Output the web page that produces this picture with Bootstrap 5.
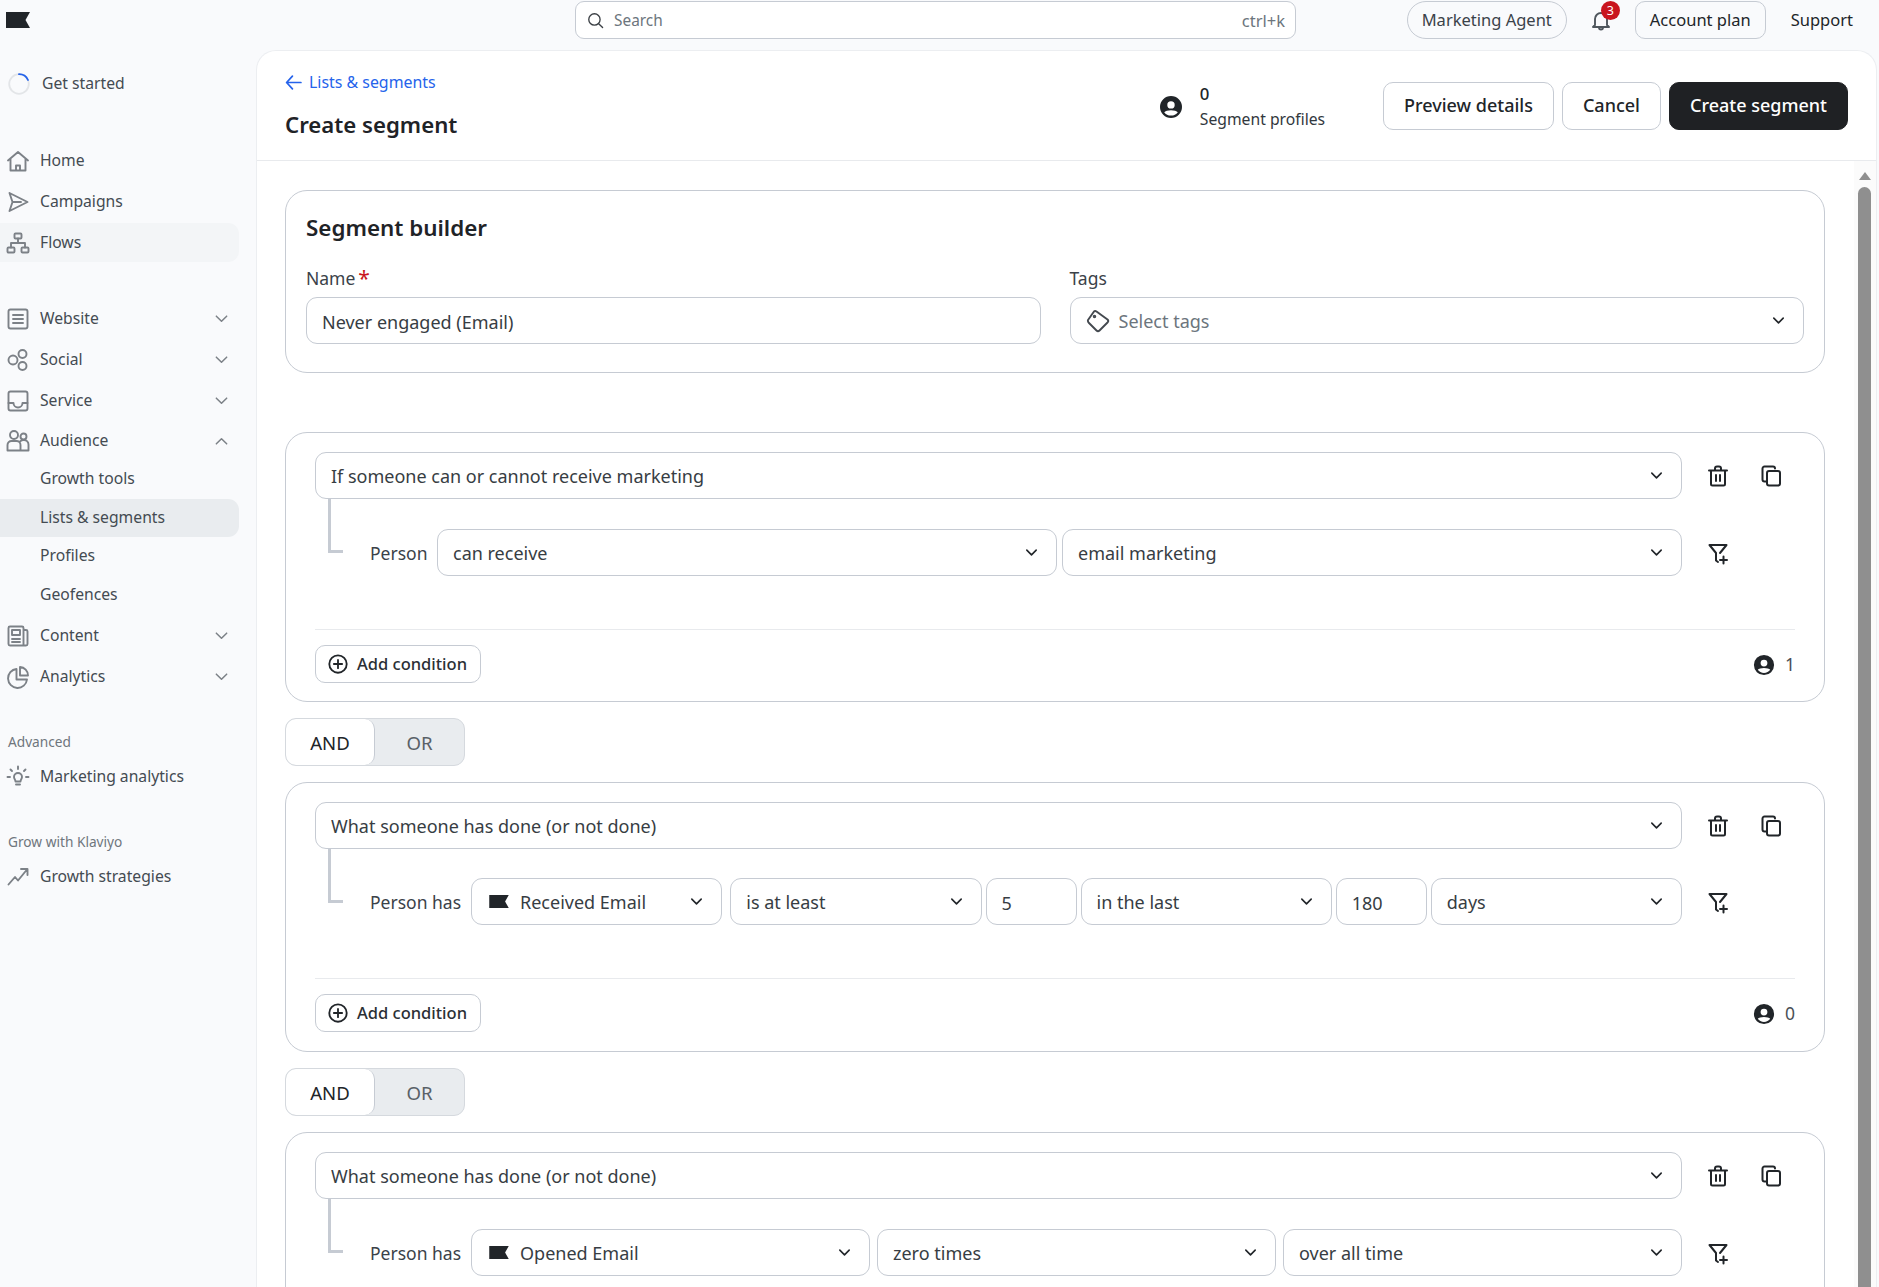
<!DOCTYPE html>
<html lang="en">
<head>
    <meta charset="UTF-8">
    <meta name="viewport" content="width=device-width, initial-scale=1.0">
    <title>Create segment</title>
    <link href="https://cdn.jsdelivr.net/npm/bootstrap@5.3.0/dist/css/bootstrap.min.css" rel="stylesheet">
    <style>
        html, body { height: 100%; }
        body { font-family: "Noto Sans", "Liberation Sans", sans-serif; font-size: 15.7px; color: #212529; background: #f9fafc; overflow: hidden; }
        svg.ico { fill: none; stroke: currentColor; stroke-width: 1.9; stroke-linecap: round; stroke-linejoin: round; flex-shrink: 0; }
        svg.ico.bold { stroke-width: 2; color: #212529; }

        /* top bar */
        .topbar { height: 50px; padding: 1px 26px 11px 6px; }
        .search { width: 721px; height: 38px; margin-left: 545px; background: #fff; border: 1px solid #c6cbd3; border-radius: 9px; padding: 2px 10px 0; color: #6c757d; font-size: 15.4px; }
        .search svg { color: #3a3f44; margin: -2px 10px 0 1px; }
        .search .kbd { font-size: 16.5px; }
        .top-btn { height: 38px; border: 1px solid #c6cbd3; border-radius: 10px; padding: 0 14px; font-size: 16.5px; color: #212529; background: transparent; }
        .top-btn.pill { border-radius: 19px; color: #3b4249; margin-right: 1px; }
        .bell { width: 34px; height: 38px; margin: 0 17px 0 16px; color: #4f565d; }
        .bell .badge { top: 0; left: 17px; width: 19px; height: 19px; padding: 0; font-size: 12.5px; font-weight: 400; line-height: 19px; background: #c9151e; border-radius: 50%; }
        .support { font-size: 16.5px; margin-left: 25px; }

        /* sidebar */
        .sidebar { width: 256px; flex-shrink: 0; padding-right: 17px; color: #444b52; }
        .started { height: 38px; padding-left: 8px; margin: 15px 0 38px; }
        .nav-row { height: 39px; margin-bottom: 2px; padding: 0 10px 0 6px; border-radius: 0 11px 11px 0; color: #444b52; text-decoration: none; }
        .nav-row.parent { height: 38px; margin-bottom: 0; }
        .nav-row.sub { height: 38.5px; margin-bottom: 0; padding-left: 40px; }
        .nav-row.hover { background: #f3f5f7; margin-bottom: 37px; }
        .nav-row.active { background: #e9ecef; }
        .nav-row.last-sub { margin-bottom: 2px; }
        .nav-row svg.ico { color: #7c8187; margin-right: 10px; }
        .nav-row svg.chev { margin: 0; stroke-width: 1.6; }
        .nav-row svg.flip { transform: rotate(180deg); }
        .nav-row.before-label { margin-bottom: 36px; }
        .nav-row.section-item { margin: 5px 0 35px; }
        .side-label { font-size: 13.7px; color: #6f767d; padding-left: 8px; }

        /* main panel */
        .main-wrap { min-height: 0; }
        .panel { background: #fff; border: 1px solid #eceef1; border-bottom: 0; border-radius: 20px 20px 0 0; margin-right: 2px; min-width: 0; }
        .panel-head { height: 110px; padding: 0 28px; border-bottom: 1px solid #e8eaed; flex-shrink: 0; }
        .back { color: #2563eb; text-decoration: none; margin-top: 17px; line-height: 28px; font-size: 15.9px; }
        .back svg { margin-right: 7px; stroke-width: 1.6; }
        .page-title { font-size: 22.2px; font-weight: 600; margin: 11px 0 0; line-height: 33px; color: #1f2327; }
        .profiles { margin-right: 58px; margin-top: 3px; gap: 17px; }
        .profiles .num { font-size: 16.8px; font-weight: 500; line-height: 23px; }
        .profiles .cap { line-height: 28px; color: #32383e; }
        .head-btn { height: 48px; border-radius: 10px; font-size: 18px; font-weight: 500; padding: 0 20px; --bs-btn-border-color: #c6cbd3; }
        .btn-create { background: #1f2124; border-color: #1f2124; color: #fff; }

        /* builder */
        .builder { padding: 29px 29px 0 28px; }
        .scrolltrack { width: 22px; background: #fbfbfb; padding: 6px 4px 0; flex-shrink: 0; }
        .scrolltrack .up { width: 0; height: 0; border: 6px solid transparent; border-top: 0; border-bottom: 8px solid #8f8f8f; margin: 5px auto 7px; }
        .scrolltrack .thumb { height: 1200px; width: 13px; background: #8f8f8f; border-radius: 7px; }
        .group-card { border: 1px solid #c6cbd3; border-radius: 22px; }
        .seg-card { height: 183px; padding: 20px 20px 0; margin-bottom: 59px; }
        .seg-card h2 { font-size: 22.4px; font-weight: 600; line-height: 34px; margin: 0 0 21px; color: #1f2327; }
        .seg-card .row { column-gap: 29px; }
        .seg-card label { font-size: 17.5px; line-height: 24px; color: #3b4249; display: block; margin-bottom: 7px; }
        .req { color: #c9151e; font-size: 21px; line-height: 16px; vertical-align: -1px; margin-left: 3px; }
        .rule-card { height: 270px; padding: 19px 29px 0; }
        .fld { height: 47px; border: 1px solid #c6cbd3; border-radius: 11px; padding: 2px 14px 0 15px; font-size: 18px; color: #373d43; background-color: #fff; box-shadow: none; }
        .form-select.fld { background-image: url("data:image/svg+xml,%3csvg xmlns='http://www.w3.org/2000/svg' viewBox='0 0 16 16'%3e%3cpath fill='none' stroke='%23212529' stroke-width='1.7' stroke-linecap='round' stroke-linejoin='round' d='M3 5.5l5 5 5-5'/%3e%3c/svg%3e"); background-size: 15px 15px; background-position: right 17px center; }
        .fld.ph { color: #6c757d; }
        .tag-ico { margin: -2px 9px 0 0; color: #44494f; }
        .top-field { flex: 1 1 0; min-width: 0; }
        .rule-actions { width: 113px; flex-shrink: 0; padding-left: 24px; gap: 29px; }
        .elbow { width: 15px; height: 54px; margin-left: 13px; border-left: 3px solid #c6cbd3; border-bottom: 3px solid #c6cbd3; flex-shrink: 0; }
        .rule-line { padding-top: 30px; }
        .rule-line.tight { padding-top: 29px; }
        .person { width: 101px; height: 47px; margin-left: 27px; flex-shrink: 0; line-height: 49px; color: #3b4249; font-size: 17.5px; }
        .person.short { width: 67px; }
        .fields { flex: 1 1 0; gap: 5px; min-width: 0; }
        .fields.gap-4px { gap: 4px; }
        .fields.gap-7px { gap: 7px; }
        .fields .grow { flex: 1 1 0; min-width: 0; }
        .fields .narrow { width: 91px; flex-shrink: 0; }
        .flag-mini { margin: -2px 11px 0 2px; flex-shrink: 0; }
        .rule-row-action { width: 113px; padding-left: 24px; flex-shrink: 0; height: 47px; }
        .rule-foot { border-top: 1px solid #e8eaed; margin-top: 53px; padding-top: 15px; }
        .add-btn { height: 38px; border-radius: 10px; font-size: 16.5px; font-weight: 500; padding: 0 13px 0 11px; gap: 8px; --bs-btn-border-color: #c6cbd3; color: #2b3035; }
        .count { color: #4a5056; gap: 10px; font-size: 17.5px; padding-top: 1px; }
        .andor { width: 180px; height: 48px; margin: 16px 0; background: #e9ecef; border: 1px solid #d5d9de; border-radius: 11px; overflow: hidden; font-size: 18.6px; }
        .andor span { height: 100%; padding-top: 2px; }
        .andor .on { width: 89px; background: #fff; border-right: 1px solid #c6cbd3; border-radius: 10px; color: #212529; }
        .andor .off { flex: 1; color: #5a6168; }
    </style>
</head>
<body class="d-flex flex-column">
    <!-- icons reused across the page -->
    <svg width="0" height="0" class="position-absolute">
        <symbol id="flag" viewBox="0 0 24 16"><path d="M0 0H24L19.5 8L24 16H0Z" fill="#212529"/></symbol>
        <symbol id="chev" viewBox="0 0 16 16"><path d="M2.5 5.5l5.5 5.5 5.5-5.5"/></symbol>
        <symbol id="user" viewBox="0 0 24 24"><path fill="#212529" stroke="none" fill-rule="evenodd" d="M12 1a11 11 0 1 0 0 22 11 11 0 0 0 0-22Zm0 5.200a3.700 3.700 0 1 1 0 7.400 3.700 3.700 0 0 1 0-7.400ZM12 20.600c-2.800 0-5.300-1.300-6.800-3.400 1-1.200 3.800-2 6.800-2s5.800.8 6.800 2c-1.500 2.100-4 3.400-6.800 3.400Z"/></symbol>
        <symbol id="trash" viewBox="0 0 24 24"><path d="M3 6.500h18M9 6V4.500a2 2 0 0 1 2-2h2a2 2 0 0 1 2 2V6M5 6.500V20a1.500 1.500 0 0 0 1.500 1.500h11A1.500 1.500 0 0 0 19 20V6.500M10 11v6M14 11v6"/></symbol>
        <symbol id="copy" viewBox="0 0 24 24"><path d="M8 17.500H5.500A2 2 0 0 1 3.500 15.500V4.500A2 2 0 0 1 5.500 2.500h8.500a2 2 0 0 1 2 2"/><rect x="8" y="7" width="13" height="14.500" rx="2"/></symbol>
        <symbol id="funnel" viewBox="0 0 24 24"><path d="M3.500 4h17l-6.500 8M3.500 4l6.500 8v7.500l2 1.500"/><path d="M17.500 15.500v7M14 19h7"/></symbol>
        <symbol id="plus" viewBox="0 0 24 24"><circle cx="12" cy="12" r="9.500"/><path d="M12 7.500v9M7.500 12h9"/></symbol>
    </svg>

    <header class="topbar d-flex align-items-center flex-shrink-0">
        <svg width="24" height="16" class="flex-shrink-0"><use href="#flag"/></svg>
        <div class="search d-flex align-items-center me-auto">
            <svg class="ico" width="17" height="17" viewBox="0 0 24 24"><circle cx="10.500" cy="10.500" r="8"/><path d="M16.500 16.500l5.500 5.500"/></svg>
            <span class="flex-grow-1">Search</span>
            <span class="kbd text-end">ctrl+k</span>
        </div>
        <button class="top-btn pill">Marketing Agent</button>
        <div class="bell position-relative d-flex align-items-center justify-content-center">
            <svg class="ico" width="24" height="24" viewBox="0 0 24 24"><path d="M6 17V11a6 6 0 0 1 12 0v6l2 2H4Z M10 19.500a2 2 0 0 0 4 0"/></svg>
            <span class="badge position-absolute">3</span>
        </div>
        <button class="top-btn">Account plan</button>
        <span class="support">Support</span>
    </header>

    <div class="main-wrap d-flex flex-grow-1">
        <aside class="sidebar">
            <div class="started d-flex align-items-center">
                <svg width="22" height="22" viewBox="0 0 22 22" class="me-2"><circle cx="11" cy="11" r="9.800" fill="none" stroke="#e3e5e8" stroke-width="1.800"/><path d="M11 1.200A9.800 9.800 0 0 1 20 7" fill="none" stroke="#2563eb" stroke-width="1.800" stroke-linecap="round"/></svg>
                <span class="ms-1">Get started</span>
            </div>
            <a class="nav-row d-flex align-items-center" href="#">
                <svg class="ico" width="24" height="24" viewBox="0 0 24 24"><path d="M2 11.500 12 3l10 8.500M4.500 9.500V21.500h15V9.500M10 21.500v-5h4v5"/></svg>Home
            </a>
            <a class="nav-row d-flex align-items-center" href="#">
                <svg class="ico" width="24" height="24" viewBox="0 0 24 24"><path d="M3.500 3 21.500 12l-18 9 3-9-3-9ZM6.500 12H15"/></svg>Campaigns
            </a>
            <a class="nav-row hover d-flex align-items-center" href="#">
                <svg class="ico" width="24" height="24" viewBox="0 0 24 24"><rect x="8.500" y="2.500" width="7" height="5" rx="1"/><rect x="1.500" y="16.500" width="7" height="5" rx="1"/><rect x="15.500" y="16.500" width="7" height="5" rx="1"/><path d="M12 7.500v4.500M5 16.500V12h14v4.500"/></svg>Flows
            </a>
            <a class="nav-row d-flex align-items-center" href="#">
                <svg class="ico" width="24" height="24" viewBox="0 0 24 24"><rect x="2.500" y="2.500" width="19" height="19" rx="2"/><path d="M7 8h10M7 12h10M7 16h10"/></svg>
                <span class="flex-grow-1">Website</span><svg class="ico chev" width="15" height="15"><use href="#chev"/></svg>
            </a>
            <a class="nav-row d-flex align-items-center" href="#">
                <svg class="ico" width="24" height="24" viewBox="0 0 24 24"><circle cx="7" cy="12" r="4.500"/><circle cx="16.500" cy="6" r="4"/><circle cx="16.500" cy="18" r="4"/></svg>
                <span class="flex-grow-1">Social</span><svg class="ico chev" width="15" height="15"><use href="#chev"/></svg>
            </a>
            <a class="nav-row d-flex align-items-center" href="#">
                <svg class="ico" width="24" height="24" viewBox="0 0 24 24"><rect x="2.500" y="2.500" width="19" height="19" rx="2"/><path d="M2.500 14H7.500a4.500 4.500 0 0 0 9 0h5"/></svg>
                <span class="flex-grow-1">Service</span><svg class="ico chev" width="15" height="15"><use href="#chev"/></svg>
            </a>
            <a class="nav-row parent d-flex align-items-center" href="#">
                <svg class="ico" width="24" height="24" viewBox="0 0 24 24"><circle cx="8" cy="6" r="4"/><circle cx="17.500" cy="7.500" r="3"/><path d="M1.500 21.500V16a4 4 0 0 1 4-4h5a4 4 0 0 1 4 4v5.500ZM14 12.500c1-1 2-1.500 3.500-1.500a4.500 4.500 0 0 1 5 4.500v6h-8"/></svg>
                <span class="flex-grow-1">Audience</span><svg class="ico chev flip" width="15" height="15"><use href="#chev"/></svg>
            </a>
            <a class="nav-row sub d-flex align-items-center" href="#">Growth tools</a>
            <a class="nav-row sub active d-flex align-items-center" href="#">Lists &amp; segments</a>
            <a class="nav-row sub d-flex align-items-center" href="#">Profiles</a>
            <a class="nav-row sub last-sub d-flex align-items-center" href="#">Geofences</a>
            <a class="nav-row d-flex align-items-center" href="#">
                <svg class="ico" width="24" height="24" viewBox="0 0 24 24"><path d="M17.500 21.500H4A1.500 1.500 0 0 1 2.500 20V4A1.500 1.500 0 0 1 4 2.500h12A1.500 1.500 0 0 1 17.500 4v17.500ZM17.500 6H20a1.500 1.500 0 0 1 1.500 1.500V20a1.500 1.500 0 0 1-1.500 1.500h-2.500"/><rect x="6" y="6" width="8" height="5"/><path d="M6 15h8M6 18h8"/></svg>
                <span class="flex-grow-1">Content</span><svg class="ico chev" width="15" height="15"><use href="#chev"/></svg>
            </a>
            <a class="nav-row before-label d-flex align-items-center" href="#">
                <svg class="ico" width="24" height="24" viewBox="0 0 24 24"><path d="M10.500 4A9.500 9.500 0 1 0 21 14.500H10.500Z"/><path d="M14 2v8.500h8A8.500 8.500 0 0 0 14 2Z"/></svg>
                <span class="flex-grow-1">Analytics</span><svg class="ico chev" width="15" height="15"><use href="#chev"/></svg>
            </a>
            <div class="side-label">Advanced</div>
            <a class="nav-row section-item d-flex align-items-center" href="#">
                <svg class="ico" width="24" height="24" viewBox="0 0 24 24"><path d="M8 12a4 4 0 1 1 8 0c0 2-1.500 2.500-1.500 4.500h-5C9.500 14.500 8 14 8 12ZM10 19.500h4M12 1.500V4M4.500 4.500l1.500 1.500M19.500 4.500 18 6M1.500 12H4M20 12h2.500"/></svg>Marketing analytics
            </a>
            <div class="side-label">Grow with Klaviyo</div>
            <a class="nav-row section-item d-flex align-items-center" href="#">
                <svg class="ico" width="24" height="24" viewBox="0 0 24 24"><path d="M2.500 19.500 9 12l3 3.500 9-11M15 4h6.500v6"/></svg>Growth strategies
            </a>
        </aside>

        <main class="panel flex-grow-1 d-flex flex-column">
            <div class="panel-head d-flex">
                <div class="flex-grow-1">
                    <a class="back d-inline-flex align-items-center" href="#">
                        <svg class="ico" width="17" height="17" viewBox="0 0 16 16"><path d="M15 8H1.500M7 2 1.500 8 7 14"/></svg>Lists &amp; segments
                    </a>
                    <h1 class="page-title">Create segment</h1>
                </div>
                <div class="profiles d-flex align-items-center">
                    <svg class="ico" width="24" height="24"><use href="#user"/></svg>
                    <div>
                        <div class="num">0</div>
                        <div class="cap">Segment profiles</div>
                    </div>
                </div>
                <div class="d-flex align-items-center gap-2">
                    <button class="btn btn-outline-dark head-btn text-dark bg-white">Preview details</button>
                    <button class="btn btn-outline-dark head-btn text-dark bg-white">Cancel</button>
                    <button class="btn head-btn btn-create">Create segment</button>
                </div>
            </div>

            <div class="d-flex flex-grow-1 overflow-hidden">
                <div class="builder flex-grow-1 overflow-hidden">
                    <section class="group-card seg-card">
                        <h2>Segment builder</h2>
                        <div class="row g-0">
                            <div class="col">
                                <label>Name<span class="req">*</span></label>
                                <input class="form-control fld" value="Never engaged (Email)">
                            </div>
                            <div class="col">
                                <label>Tags</label>
                                <div class="form-select fld ph d-flex align-items-center">
                                    <svg class="ico tag-ico" width="24" height="24" viewBox="0 0 24 24"><path d="M2 11 8 2.500Q9 1.500 10.500 2.500L21.500 10.500Q23 12 21.500 13.500L13.500 21.500Q12 23 10.500 21.500L3 14Q1.500 12.500 2 11Z"/><circle cx="8.500" cy="7.500" r=".8"/></svg>Select tags
                                </div>
                            </div>
                        </div>
                    </section>

                    <section class="group-card rule-card">
                        <div class="d-flex">
                            <select class="form-select fld top-field"><option>If someone can or cannot receive marketing</option></select>
                            <div class="rule-actions d-flex align-items-center">
                                <svg class="ico bold" width="24" height="24"><use href="#trash"/></svg>
                                <svg class="ico bold" width="24" height="24"><use href="#copy"/></svg>
                            </div>
                        </div>
                        <div class="d-flex align-items-start">
                            <div class="elbow"></div>
                            <div class="rule-line d-flex flex-grow-1">
                                <span class="person short">Person</span>
                                <div class="fields d-flex">
                                    <select class="form-select fld grow"><option>can receive</option></select>
                                    <select class="form-select fld grow"><option>email marketing</option></select>
                                </div>
                                <div class="rule-row-action d-flex align-items-center"><svg class="ico bold" width="24" height="24"><use href="#funnel"/></svg></div>
                            </div>
                        </div>
                        <div class="rule-foot d-flex justify-content-between align-items-center">
                            <button class="btn btn-outline-dark add-btn d-flex align-items-center bg-white"><svg class="ico bold" width="22" height="22"><use href="#plus"/></svg>Add condition</button>
                            <div class="count d-flex align-items-center"><svg class="ico" width="22" height="22"><use href="#user"/></svg>1</div>
                        </div>
                    </section>

                    <div class="andor d-flex">
                        <span class="on d-flex align-items-center justify-content-center">AND</span>
                        <span class="off d-flex align-items-center justify-content-center">OR</span>
                    </div>

                    <section class="group-card rule-card">
                        <div class="d-flex">
                            <select class="form-select fld top-field"><option>What someone has done (or not done)</option></select>
                            <div class="rule-actions d-flex align-items-center">
                                <svg class="ico bold" width="24" height="24"><use href="#trash"/></svg>
                                <svg class="ico bold" width="24" height="24"><use href="#copy"/></svg>
                            </div>
                        </div>
                        <div class="d-flex align-items-start">
                            <div class="elbow"></div>
                            <div class="rule-line tight d-flex flex-grow-1">
                                <span class="person">Person has</span>
                                <div class="fields gap-4px d-flex">
                                    <div class="form-select fld grow d-flex align-items-center me-1"><svg class="flag-mini" width="20" height="13"><use href="#flag"/></svg>Received Email</div>
                                    <select class="form-select fld grow"><option>is at least</option></select>
                                    <input class="form-control fld narrow" value="5">
                                    <select class="form-select fld grow"><option>in the last</option></select>
                                    <input class="form-control fld narrow" value="180">
                                    <select class="form-select fld grow"><option>days</option></select>
                                </div>
                                <div class="rule-row-action d-flex align-items-center"><svg class="ico bold" width="24" height="24"><use href="#funnel"/></svg></div>
                            </div>
                        </div>
                        <div class="rule-foot d-flex justify-content-between align-items-center">
                            <button class="btn btn-outline-dark add-btn d-flex align-items-center bg-white"><svg class="ico bold" width="22" height="22"><use href="#plus"/></svg>Add condition</button>
                            <div class="count d-flex align-items-center"><svg class="ico" width="22" height="22"><use href="#user"/></svg>0</div>
                        </div>
                    </section>

                    <div class="andor d-flex">
                        <span class="on d-flex align-items-center justify-content-center">AND</span>
                        <span class="off d-flex align-items-center justify-content-center">OR</span>
                    </div>

                    <section class="group-card rule-card">
                        <div class="d-flex">
                            <select class="form-select fld top-field"><option>What someone has done (or not done)</option></select>
                            <div class="rule-actions d-flex align-items-center">
                                <svg class="ico bold" width="24" height="24"><use href="#trash"/></svg>
                                <svg class="ico bold" width="24" height="24"><use href="#copy"/></svg>
                            </div>
                        </div>
                        <div class="d-flex align-items-start">
                            <div class="elbow"></div>
                            <div class="rule-line d-flex flex-grow-1">
                                <span class="person">Person has</span>
                                <div class="fields gap-7px d-flex">
                                    <div class="form-select fld grow d-flex align-items-center"><svg class="flag-mini" width="20" height="13"><use href="#flag"/></svg>Opened Email</div>
                                    <select class="form-select fld grow"><option>zero times</option></select>
                                    <select class="form-select fld grow"><option>over all time</option></select>
                                </div>
                                <div class="rule-row-action d-flex align-items-center"><svg class="ico bold" width="24" height="24"><use href="#funnel"/></svg></div>
                            </div>
                        </div>
                    </section>
                </div>
                <div class="scrolltrack">
                    <div class="up"></div>
                    <div class="thumb"></div>
                </div>
            </div>
        </main>
    </div>
</body>
</html>
